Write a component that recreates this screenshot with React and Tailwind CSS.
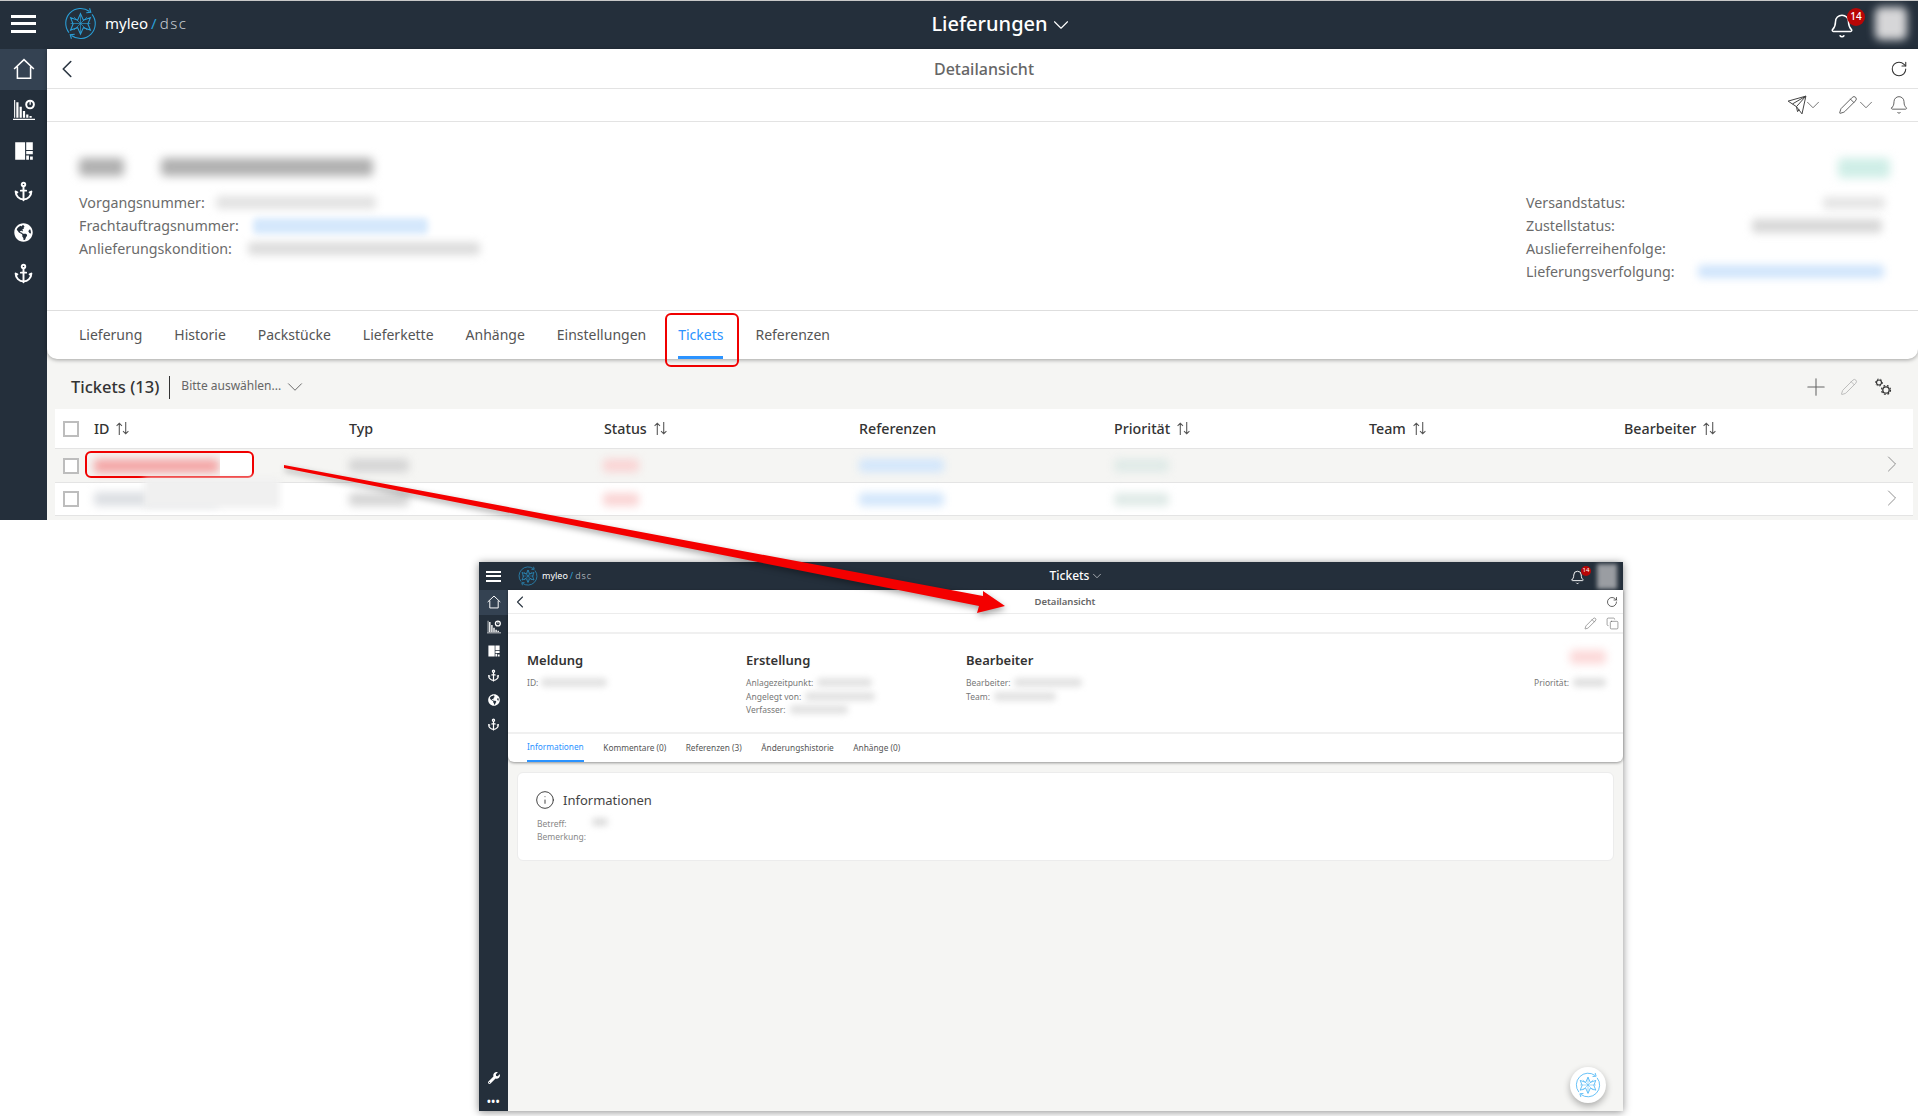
import { Anchor, Bell, ChevronDown, ChevronLeft, ChevronRight, Copy, Info, Pencil, Plus, RotateCw } from 'lucide-react';
import { FaGlobeAmericas, FaWrench } from 'react-icons/fa';

const TABS = ['Lieferung', 'Historie', 'Packstücke', 'Lieferkette', 'Anhänge', 'Einstellungen', 'Tickets', 'Referenzen'];
const COLUMNS = ['ID', 'Typ', 'Status', 'Referenzen', 'Priorität', 'Team', 'Bearbeiter'];
const SORTABLE = ['ID', 'Status', 'Priorität', 'Team', 'Bearbeiter'];
const SMALL_TABS = ['Kommentare (0)', 'Referenzen (3)', 'Änderungshistorie', 'Anhänge (0)'];

function Logo({ size, color = '#2a9fd8' }) {
    return (
        <svg width={size} height={size} viewBox="0 0 40 40" fill="none" stroke={color} strokeWidth="1.3">
            <path d="M6 31A18 18 0 0 1 31 5.500" />
            <path d="M34 9A18 18 0 0 1 9 34.500" />
            <path d="M31 1.500l1.500 5-5.500 .5M9 38.500L7.500 33.500l5.500-.5" />
            <path d="M20 8l3.500 8 8.500-3-3 7.500 3 7.500-8.500-3-3.500 8-3.500-8-8.500 3 3-7.500-3-7.500 8.500 3z" />
            <path d="M12 12l16 16M28 12L12 28M20 8v24M8 20h24" strokeWidth="0.8" />
        </svg>
    );
}

function HomeIcon({ size }) {
    return (
        <svg width={size} height={size} viewBox="0 0 20 20" fill="none" stroke="white" strokeWidth="1.400">
            <path d="M1 10L10 1.500 19 10M4 8v10.500h12V8" />
        </svg>
    );
}

function ChartIcon({ size }) {
    return (
        <svg width={size} height={size} viewBox="0 0 20 20" fill="white">
            <path d="M1 1h1v16H1zM3 3h2v14H3zM6 7h2v10H6zM9 11h2v6H9zM12 14h2v3h-2zM15 15.500h2V17h-2zM0 18h20v1H0z" />
            <circle cx="15.500" cy="5" r="3.500" fill="none" stroke="white" strokeWidth="1.800" />
            <path d="M15 2h1.200v3.200H15z" />
        </svg>
    );
}

function BoardIcon({ size }) {
    return (
        <svg width={size} height={size} viewBox="0 0 20 20" fill="white">
            <path d="M2 2h9v16H2zM12 2h6v7h-6zM12 10h6v3h-6zM12 14h2.500v4H12zM15.500 15H18v3h-2.500z" />
        </svg>
    );
}

function SortIcon() {
    return (
        <svg width="15" height="15" viewBox="0 0 14 14" fill="none" stroke="#555" strokeWidth="1">
            <path d="M4 13V2M1.500 4.500L4 2l2.500 2.500M10 1v11M7.500 9.500L10 12l2.500-2.500" />
        </svg>
    );
}

function SendIcon() {
    return (
        <svg width="20" height="20" viewBox="0 0 18 18" fill="none" stroke="#444" strokeWidth="0.900">
            <path d="M1 5.500L17 1l-3.500 16-5-6.500zM17 1L8.500 10.500 9.500 15l1.500-2M17 1L5 8" />
        </svg>
    );
}

function GearsIcon() {
    return (
        <svg width="18" height="18" viewBox="0 0 18 18" fill="none" stroke="#333">
            <circle cx="5" cy="4.500" r="2.500" strokeWidth="1.200" />
            <circle cx="5" cy="4.500" r="3.500" strokeWidth="1" strokeDasharray="1.500 2" />
            <circle cx="12" cy="12" r="3.200" strokeWidth="1.300" />
            <circle cx="12" cy="12" r="4.500" strokeWidth="1.200" strokeDasharray="1.800 1.800" />
        </svg>
    );
}

function Checkbox() {
    return <span className="block h-[16px] w-[16px] border-2 border-[#bdbdbd] bg-white" />;
}

// Rail of icons, shared by the full size view and the small one
function Rail({ iconSize, rowHeight, anchorClass, globeClass }) {
    return (
        <>
            <div className="flex items-center justify-center bg-[#344252]" style={{ height: rowHeight }}>
                <HomeIcon size={iconSize} />
            </div>
            <div className="flex items-center justify-center" style={{ height: rowHeight }}>
                <ChartIcon size={iconSize} />
            </div>
            <div className="flex items-center justify-center" style={{ height: rowHeight }}>
                <BoardIcon size={iconSize} />
            </div>
            <div className="flex items-center justify-center" style={{ height: rowHeight }}>
                <Anchor className={anchorClass} strokeWidth={2.2} />
            </div>
            <div className="flex items-center justify-center" style={{ height: rowHeight }}>
                <FaGlobeAmericas className={globeClass} />
            </div>
            <div className="flex items-center justify-center" style={{ height: rowHeight }}>
                <Anchor className={anchorClass} strokeWidth={2.2} />
            </div>
        </>
    );
}

function TopHeader() {
    return (
        <header className="flex h-[49px] items-center border-t border-[#c8c8c8] bg-[#242f3b] pb-[3px] pr-[11px]">
            <div className="ml-[11px] flex w-[25px] flex-col gap-[4.500px]">
                <span className="h-[3px] bg-white" />
                <span className="h-[3px] bg-white" />
                <span className="h-[3px] bg-white" />
            </div>
            <div className="ml-[28px] flex w-[132px] items-center gap-[8px] text-[15px] text-white">
                <Logo size={33} />
                <span className="whitespace-nowrap">
                    myleo
                    <span className="mx-[3px] text-[#2a9fd8]">/</span>
                    <span className="font-light tracking-[1.500px] text-[#c9ced3]">dsc</span>
                </span>
            </div>
            <div className="flex flex-1 items-center justify-center pr-[20px] text-[20px] font-medium text-white">
                Lieferungen
                <ChevronDown className="mt-[3px] h-[26px] w-[26px]" strokeWidth={1} />
            </div>
            <div className="relative mr-[20px] mt-[4px]">
                <Bell className="h-[26px] w-[26px] text-white" strokeWidth={1.400} />
                <span className="absolute -right-[10px] -top-[5px] flex h-[18px] w-[18px] items-center justify-center rounded-full bg-[#b80606] text-[10px] font-medium text-white">
                    14
                </span>
            </div>
            <span className="h-[33px] w-[32px] rounded-md bg-[#d6d6d8] blur-[4px]" />
        </header>
    );
}

function DetailHead() {
    return (
        <section className="flex h-[188px] justify-between pl-[32px] pr-[28px] pt-[36px] text-[14.250px] leading-[23px] text-[#6b6b6b]">
            <div>
                <div className="flex h-[20px] w-[300px] gap-[37px]">
                    <span className="h-[18px] w-[45px] rounded-sm bg-[#b0b0b0] blur-[5px]" />
                    <span className="h-[18px] w-[212px] rounded-sm bg-[#b0b0b0] blur-[5px]" />
                </div>
                <div className="mt-[13px] flex items-center gap-[11px]">
                    Vorgangsnummer:
                    <span className="h-[13px] w-[160px] rounded-sm bg-[#e2e2e2] blur-[4px]" />
                </div>
                <div className="flex items-center gap-[14px]">
                    Frachtauftragsnummer:
                    <span className="h-[16px] w-[175px] rounded-sm bg-[#d5e8fc] blur-[3px]" />
                </div>
                <div className="flex items-center gap-[16px]">
                    Anlieferungskondition:
                    <span className="h-[13px] w-[232px] rounded-sm bg-[#dcdcdc] blur-[4px]" />
                </div>
            </div>
            <div className="w-[364px]">
                <div className="flex h-[20px] justify-end">
                    <span className="h-[20px] w-[52px] rounded-sm bg-[#cfeee7] blur-[5px]" />
                </div>
                <div className="mt-[13px] flex items-center justify-between">
                    Versandstatus:
                    <span className="mr-[5px] h-[12px] w-[62px] rounded-sm bg-[#e4e4e4] blur-[4px]" />
                </div>
                <div className="flex items-center justify-between">
                    Zustellstatus:
                    <span className="mr-[8px] h-[14px] w-[130px] rounded-sm bg-[#d8d8d8] blur-[4px]" />
                </div>
                <div>Auslieferreihenfolge:</div>
                <div className="flex items-center justify-between">
                    Lieferungsverfolgung:
                    <span className="mr-[6px] h-[13px] w-[186px] rounded-sm bg-[#cfe4fb] blur-[4px]" />
                </div>
            </div>
        </section>
    );
}

function TicketRow({ striped }) {
    return (
        <div className={`flex items-center border-b border-[#e4e4e4] pl-[8px] ${striped ? 'h-[34px] bg-[#f5f5f3]' : 'h-[33px] bg-white'}`}>
            <div className="w-[31px]">
                <Checkbox />
            </div>
            <div className="w-[255px]">
                <span className={`block h-[14px] w-[125px] rounded-sm blur-[4px] ${striped ? 'bg-[#f4a6a6]' : 'bg-[#dcdfe3]'}`} />
            </div>
            <div className="w-[254px]">
                <span className="block h-[13px] w-[60px] rounded-sm bg-[#d4d4d4] blur-[4px]" />
            </div>
            <div className="w-[256px]">
                <span className="block h-[13px] w-[36px] rounded-sm bg-[#fad4d4] blur-[4px]" />
            </div>
            <div className="w-[255px]">
                <span className="block h-[13px] w-[85px] rounded-sm bg-[#d2e6fb] blur-[4px]" />
            </div>
            <div className="w-[255px]">
                <span className="block h-[13px] w-[55px] rounded-sm bg-[#dfeae7] blur-[4px]" />
            </div>
            <div className="flex-1" />
            <ChevronRight className="mb-[3px] mr-[7px] h-[28px] w-[28px] text-[#777]" strokeWidth={0.700} />
        </div>
    );
}

function TopShot() {
    return (
        <div className="h-[520px] w-[1918px] overflow-hidden">
            <TopHeader />
            <div className="flex h-[471px]">
                <aside className="w-[47px] shrink-0 bg-[#242f3b]">
                    <Rail iconSize={22} rowHeight={40.800} anchorClass="h-[21px] w-[21px] text-white" globeClass="h-[19px] w-[19px] text-white" />
                </aside>
                <main className="flex-1 bg-[#f5f5f3]">
                    <div className="rounded-b-[10px] bg-white shadow-[0_1px_4px_rgba(0,0,0,0.35)]">
                        <div className="flex h-[40px] items-center justify-between border-b border-[#e3e3e3] pl-[5px] pr-[10px]">
                            <ChevronLeft className="h-[30px] w-[30px] text-[#2b3642]" strokeWidth={1.300} />
                            <span className="mr-[4px] text-[16px] font-medium text-[#666]">Detailansicht</span>
                            <RotateCw className="h-[18px] w-[18px] text-[#333]" strokeWidth={1.400} />
                        </div>
                        <div className="flex h-[33px] items-center justify-end border-b border-[#e3e3e3] pr-[9px] text-[#444]">
                            <SendIcon />
                            <ChevronDown className="-ml-[5px] h-[22px] w-[22px]" strokeWidth={0.800} />
                            <Pencil className="ml-[14px] h-[20px] w-[20px]" strokeWidth={1} />
                            <ChevronDown className="-ml-[3px] h-[22px] w-[22px]" strokeWidth={0.800} />
                            <Bell className="ml-[12px] h-[20px] w-[20px]" strokeWidth={1} />
                        </div>
                        <DetailHead />
                        <nav className="flex h-[49px] items-stretch gap-[32px] border-t border-[#dedede] pl-[32px] pt-[2px] text-[14px] text-[#555]">
                            {TABS.map((t) => (
                                <span
                                    key={t}
                                    className={`flex items-center border-b-[3px] ${t === 'Tickets' ? 'border-[#2b93ff] text-[#2b93ff]' : 'border-transparent'}`}
                                >
                                    {t}
                                </span>
                            ))}
                        </nav>
                    </div>
                    <div className="flex h-[50px] items-center pl-[24px] pr-[26px] pt-[6px]">
                        <span className="text-[16.500px] font-medium text-[#333]">Tickets (13)</span>
                        <span className="ml-[10px] h-[23px] w-px bg-[#333]" />
                        <span className="mb-[2px] ml-[11px] text-[12px] text-[#666]">Bitte auswählen...</span>
                        <ChevronDown className="ml-[1px] h-[26px] w-[26px] text-[#555]" strokeWidth={0.800} />
                        <Plus className="ml-auto h-[28px] w-[28px] text-[#666]" strokeWidth={0.900} />
                        <Pencil className="ml-[10px] h-[18px] w-[18px] text-[#aaa]" strokeWidth={1} />
                        <span className="ml-[16px]">
                            <GearsIcon />
                        </span>
                    </div>
                    <div className="ml-[8px] mr-[5px]">
                        <div className="flex h-[40px] items-center border-b border-[#e4e4e4] bg-white pl-[8px] text-[14.250px] font-medium text-[#333]">
                            <div className="w-[31px]">
                                <Checkbox />
                            </div>
                            {COLUMNS.map((c) => (
                                <div key={c} className="flex w-[255px] items-center gap-[6px]">
                                    {c}
                                    {SORTABLE.includes(c) && <SortIcon />}
                                </div>
                            ))}
                        </div>
                        <TicketRow striped />
                        <TicketRow />
                    </div>
                </main>
            </div>
        </div>
    );
}

function SmallShot() {
    return (
        <div className="ml-[479px] mt-[42px] flex h-[549px] w-[1144px] flex-col shadow-[0_1px_8px_rgba(0,0,0,0.45)]">
            <header className="flex h-[28px] shrink-0 items-center bg-[#242f3b] pr-[6px]">
                <div className="ml-[7px] flex w-[15px] flex-col gap-[2.500px]">
                    <span className="h-[2px] bg-white" />
                    <span className="h-[2px] bg-white" />
                    <span className="h-[2px] bg-white" />
                </div>
                <div className="ml-[17px] flex w-[82px] items-center gap-[4px] text-[9px] text-white">
                    <Logo size={20} />
                    <span className="whitespace-nowrap">
                        myleo
                        <span className="mx-[2px] text-[#2a9fd8]">/</span>
                        <span className="font-light tracking-[1px] text-[#c9ced3]">dsc</span>
                    </span>
                </div>
                <div className="flex flex-1 items-center justify-center pr-[16px] text-[12px] font-medium text-white">
                    Tickets
                    <ChevronDown className="ml-[1px] h-[14px] w-[14px]" strokeWidth={1} />
                </div>
                <div className="relative mr-[12px] mt-[2px]">
                    <Bell className="h-[15px] w-[15px] text-white" strokeWidth={1.500} />
                    <span className="absolute -right-[6px] -top-[4px] flex h-[10px] w-[10px] items-center justify-center rounded-full bg-[#b80606] text-[6px] text-white">
                        14
                    </span>
                </div>
                <span className="h-[25px] w-[20px] bg-[#9a9da2] blur-[2px]" />
            </header>
            <div className="flex min-h-0 flex-1">
                <aside className="flex w-[29px] shrink-0 flex-col bg-[#242f3b]">
                    <Rail iconSize={14} rowHeight={24.500} anchorClass="h-[13px] w-[13px] text-white" globeClass="h-[12px] w-[12px] text-white" />
                    <div className="mt-auto flex flex-col items-center gap-[14px] pb-[7px]">
                        <FaWrench className="h-[12px] w-[12px] text-white" />
                        <span className="text-[10px] font-bold leading-[6px] tracking-[0.5px] text-white">•••</span>
                    </div>
                </aside>
                <main className="relative min-w-0 flex-1 bg-[#f5f5f3]">
                    <div className="rounded-b-[6px] bg-white shadow-[0_1px_3px_rgba(0,0,0,0.4)]">
                        <div className="flex h-[24px] items-center justify-between border-b border-[#ececec] pl-[2px] pr-[5px] pt-[1px]">
                            <ChevronLeft className="h-[20px] w-[20px] text-[#2b3642]" strokeWidth={1.300} />
                            <span className="mr-[6px] text-[9.500px] font-semibold text-[#666]">Detailansicht</span>
                            <RotateCw className="h-[12px] w-[12px] text-[#333]" strokeWidth={1.500} />
                        </div>
                        <div className="flex h-[20px] items-center justify-end gap-[9px] border-b-2 border-[#f0f0f0] pr-[4.500px] text-[#555]">
                            <Pencil className="h-[13px] w-[13px]" strokeWidth={1} />
                            <Copy className="h-[13px] w-[13px]" strokeWidth={1} />
                        </div>
                        <section className="flex h-[98px] pl-[19px] pr-[17px] pt-[18px] text-[8.500px] leading-[13.500px] text-[#777]">
                            <div className="w-[219px]">
                                <div className="mb-[8px] text-[13px] font-semibold leading-[16px] text-[#333]">Meldung</div>
                                <div className="flex items-center gap-[3px]">
                                    ID:
                                    <span className="h-[9px] w-[66px] rounded-sm bg-[#e2e2e2] blur-[3px]" />
                                </div>
                            </div>
                            <div className="w-[220px]">
                                <div className="mb-[8px] text-[13px] font-semibold leading-[16px] text-[#333]">Erstellung</div>
                                <div className="flex items-center gap-[4px]">
                                    Anlagezeitpunkt:
                                    <span className="h-[9px] w-[55px] rounded-sm bg-[#e2e2e2] blur-[3px]" />
                                </div>
                                <div className="flex items-center gap-[4px]">
                                    Angelegt von:
                                    <span className="h-[9px] w-[70px] rounded-sm bg-[#e2e2e2] blur-[3px]" />
                                </div>
                                <div className="flex items-center gap-[4px]">
                                    Verfasser:
                                    <span className="h-[9px] w-[58px] rounded-sm bg-[#e2e2e2] blur-[3px]" />
                                </div>
                            </div>
                            <div className="flex-1">
                                <div className="mb-[8px] text-[13px] font-semibold leading-[16px] text-[#333]">Bearbeiter</div>
                                <div className="flex items-center gap-[4px]">
                                    Bearbeiter:
                                    <span className="h-[9px] w-[68px] rounded-sm bg-[#e2e2e2] blur-[3px]" />
                                </div>
                                <div className="flex items-center gap-[4px]">
                                    Team:
                                    <span className="h-[9px] w-[62px] rounded-sm bg-[#e2e2e2] blur-[3px]" />
                                </div>
                            </div>
                            <div className="flex w-[120px] flex-col items-end">
                                <span className="mb-[12px] mt-[-2px] h-[14px] w-[36px] rounded-sm bg-[#fcd9d9] blur-[4px]" />
                                <div className="flex items-center gap-[4px]">
                                    Priorität:
                                    <span className="h-[9px] w-[33px] rounded-sm bg-[#e0e0e0] blur-[3px]" />
                                </div>
                            </div>
                        </section>
                        <nav className="flex h-[30px] items-stretch gap-[19.500px] border-t-2 border-[#f0f0f0] pl-[19px] text-[8.300px] text-[#555]">
                            <span className="flex items-center border-b-2 border-[#2b93ff] text-[#2b93ff]">Informationen</span>
                            {SMALL_TABS.map((t) => (
                                <span key={t} className="flex items-center">
                                    {t}
                                </span>
                            ))}
                        </nav>
                    </div>
                    <div className="mx-[9px] mt-[10px] h-[89px] rounded-[6px] border border-[#ececec] bg-white px-[19px] pt-[17px]">
                        <div className="-ml-[2px] flex items-center gap-[8px] text-[13px] leading-[20px] text-[#444]">
                            <Info className="h-[20px] w-[20px] text-[#333]" strokeWidth={1.100} />
                            Informationen
                        </div>
                        <div className="mt-[8px] flex gap-[6px] text-[8.500px] leading-[12.500px] text-[#888]">
                            <div>
                                <div>Betreff:</div>
                                <div>Bemerkung:</div>
                            </div>
                            <span className="h-[8px] w-[16px] rounded-sm bg-[#dcdcdc] blur-[3px]" />
                        </div>
                    </div>
                    <button
                        type="button"
                        className="absolute bottom-[8px] right-[17px] flex h-[36px] w-[36px] items-center justify-center rounded-full bg-white shadow-[0_3px_7px_rgba(0,0,0,0.3)]"
                    >
                        <Logo size={26} color="#4db7f5" />
                    </button>
                </main>
            </div>
        </div>
    );
}

export default function App() {
    return (
        <div className="relative h-[1116px] w-[1918px] overflow-hidden bg-white font-['Noto_Sans',sans-serif]">
            <TopShot />
            <SmallShot />

            {/* annotations drawn over the two shots */}
            <span className="absolute left-[220px] top-[451px] h-[26px] w-[32px] bg-white" />
            <span className="absolute left-[85px] top-[451px] h-[27px] w-[169px] rounded-[6px] border-2 border-[#f00000]" />
            <span className="absolute left-[144px] top-[478px] h-[30px] w-[136px] bg-[#f0f0f0] blur-[3px]" />
            <span className="absolute left-[665px] top-[313px] h-[54px] w-[74px] rounded-[6px] border-2 border-[#f00000]" />
            <svg className="absolute left-0 top-0 drop-shadow-[1px_3px_3px_rgba(0,0,0,0.35)]" width="1918" height="1116">
                <polygon points="284,465 983,596 983,591 1005,606 977,613 979,606 284,468" fill="#f40000" />
            </svg>
        </div>
    );
}
